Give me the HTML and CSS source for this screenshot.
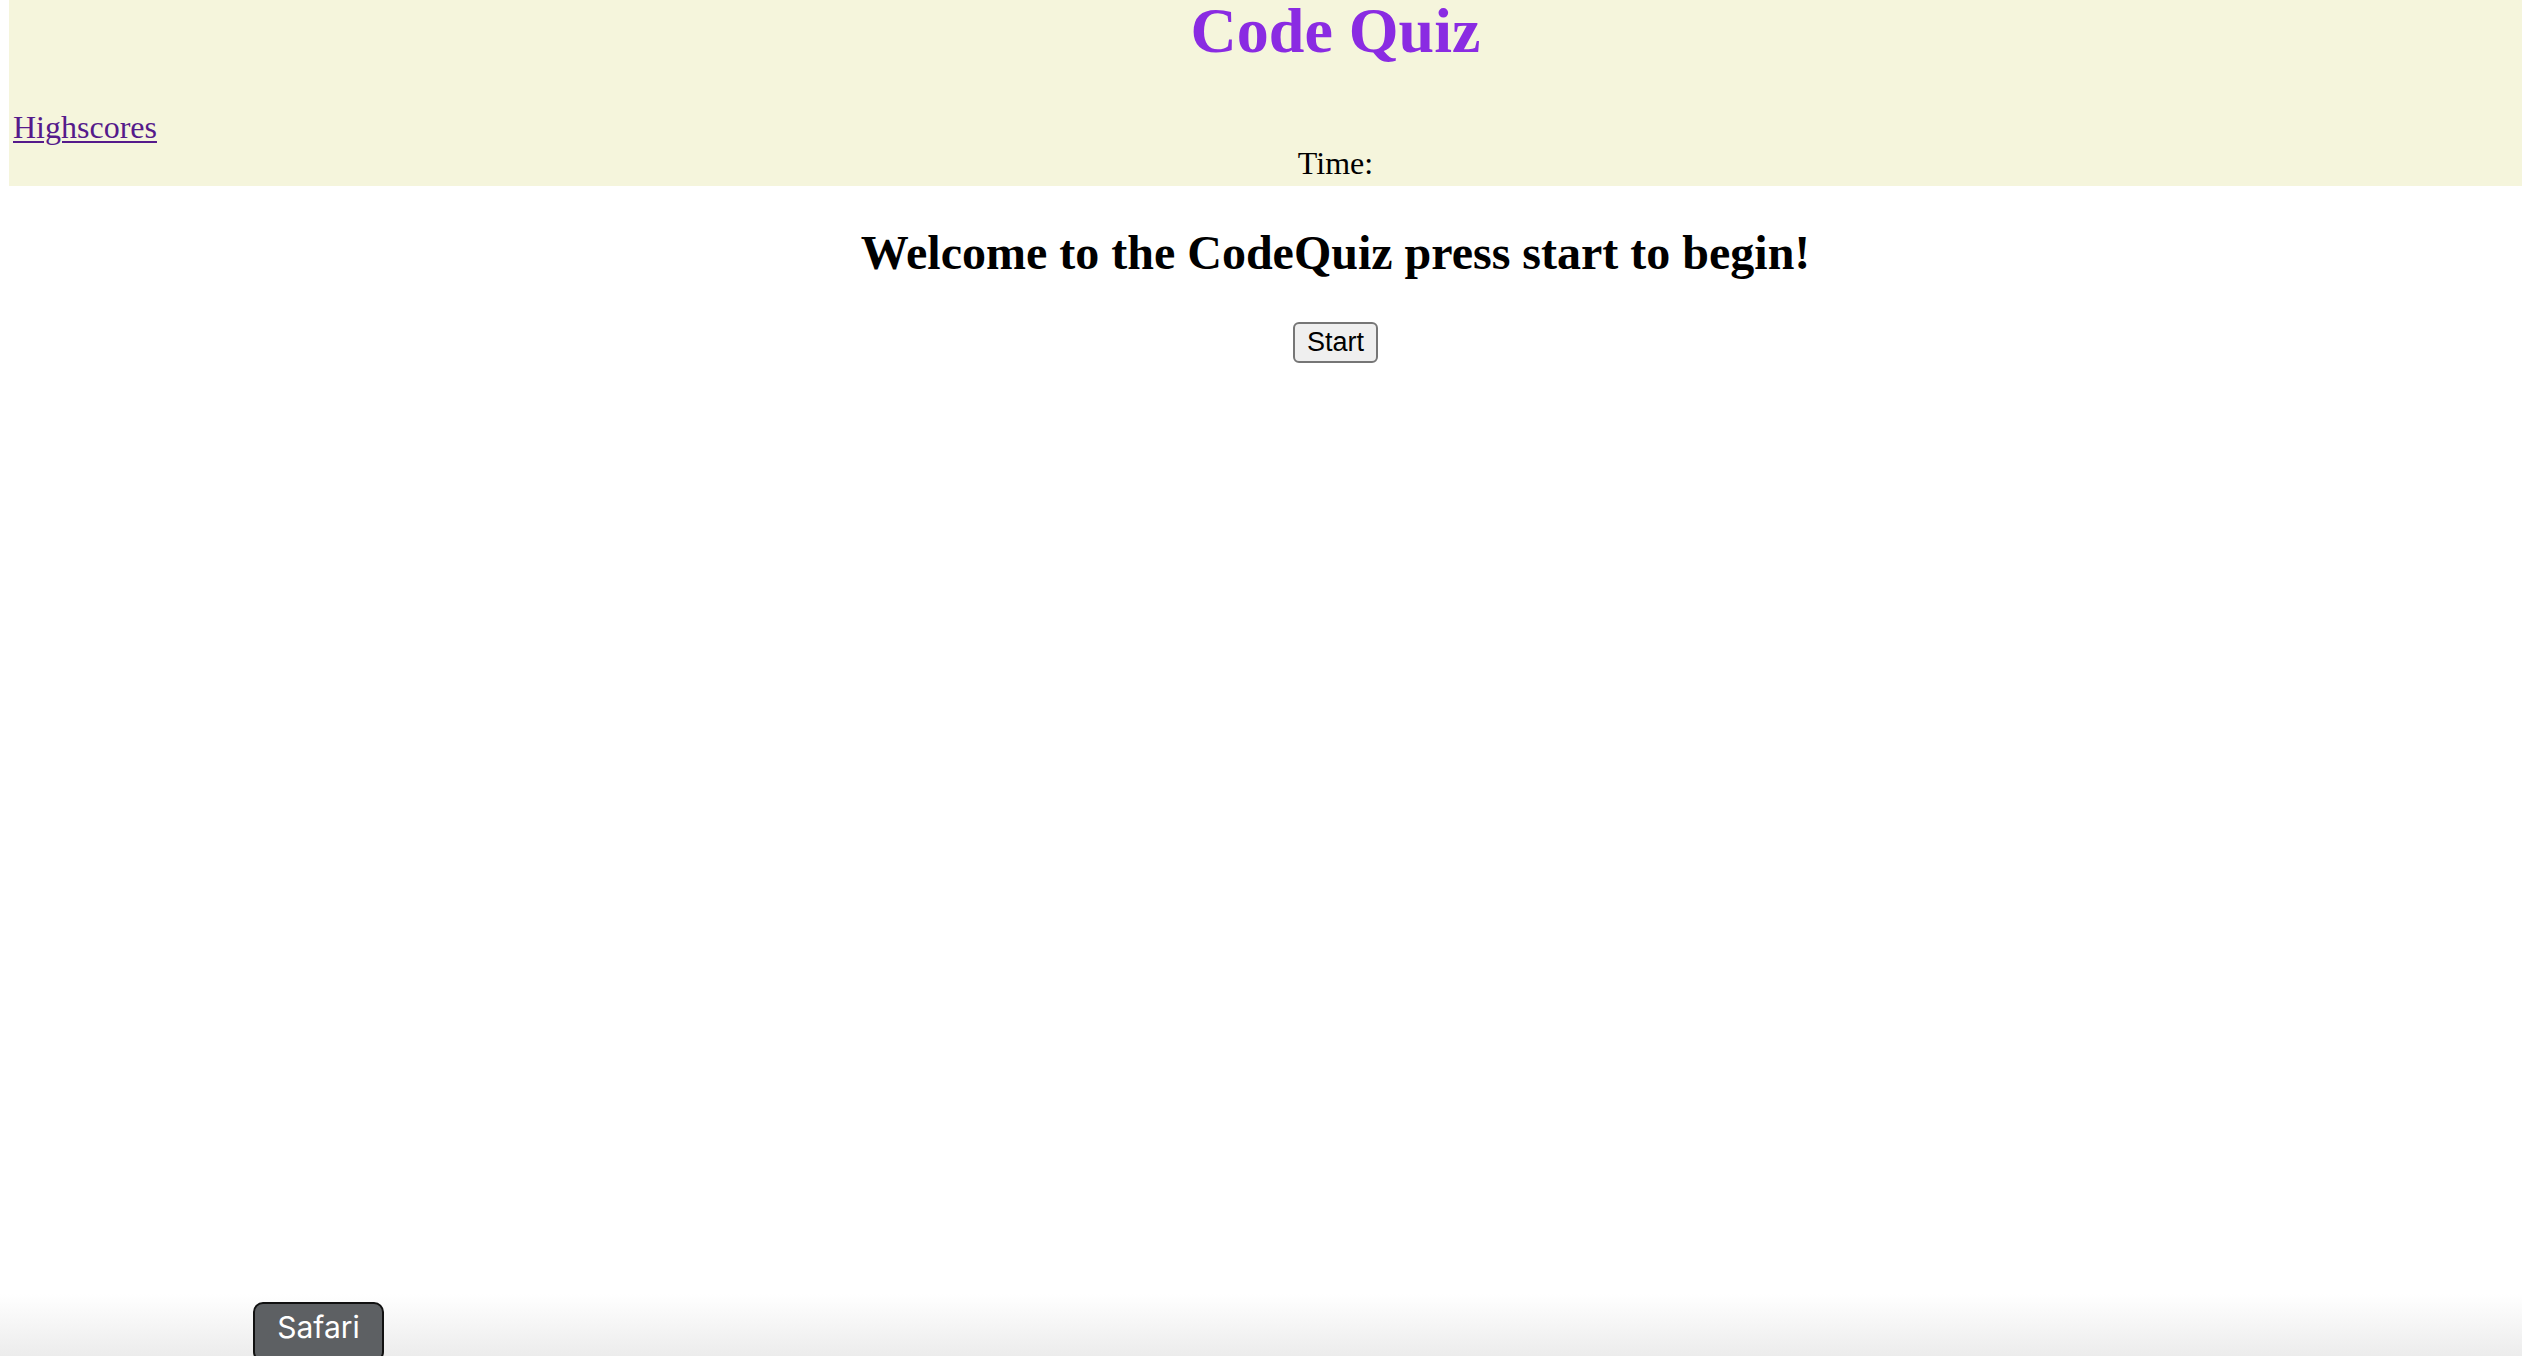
FILE: index.html
```html
<!DOCTYPE html>
<html lang="en">
<head>
<meta charset="utf-8">
<title>Code Quiz</title>
<link rel="stylesheet" href="styles.css">
</head>
<body>
<div class="page">
  <header class="top">
    <h1 class="title shifted">Code Quiz</h1>
    <a class="scores" href="#">Highscores</a>
    <div class="timer shifted">Time:</div>
  </header>
  <main class="intro shifted">
    <h2 class="welcome">Welcome to the CodeQuiz press start to begin!</h2>
    <button class="start" type="button">Start</button>
  </main>
</div>
<div class="dock-shade"></div>
<div class="tooltip">Safari<span class="tail"></span></div>
</body>
</html>
```

FILE: styles.css
```css
html {
  overflow: hidden;
  background: #ffffff;
}

body {
  margin: 0;
  height: 1356px;
  overflow: hidden;
  position: relative;
}

.page {
  margin-left: 9px;
  font-family: "Liberation Serif", "Times New Roman", serif;
}

.shifted {
  padding-left: 140px;
}

.top {
  background: #f5f5dc;
  height: 186px;
  box-sizing: border-box;
  display: flex;
  flex-direction: column;
}

.title {
  margin: 0;
  height: 62px;
  line-height: 62px;
  font-size: 64px;
  font-weight: bold;
  color: #8a2be2;
  text-align: center;
}

.scores {
  margin-top: 47px;
  margin-left: 4px;
  align-self: flex-start;
  font-size: 32px;
  line-height: 36px;
  color: #551a8b;
  text-decoration: underline;
  text-decoration-thickness: 2px;
  text-underline-offset: 3px;
}

.timer {
  font-size: 32px;
  line-height: 37px;
  color: #000000;
  text-align: center;
}

.intro {
  display: flex;
  flex-direction: column;
  align-items: center;
}

.welcome {
  margin: 39px 0 0;
  font-size: 48px;
  line-height: 55px;
  font-weight: bold;
  color: #000000;
  text-align: center;
}

.start {
  margin-top: 42px;
  font-family: "Liberation Sans", Arial, sans-serif;
  font-size: 27px;
  line-height: 29px;
  padding: 4px 12px;
  border: 2px solid #767676;
  border-radius: 6px;
  background: #efefef;
  color: #000000;
}

.dock-shade {
  position: absolute;
  left: 0;
  right: 0;
  bottom: 0;
  height: 62px;
  background: linear-gradient(to bottom, rgba(240, 240, 240, 0) 0%, rgba(236, 236, 236, 1) 100%);
}

.tooltip {
  position: absolute;
  left: 253px;
  top: 1302px;
  width: 131px;
  height: 60px;
  box-sizing: border-box;
  background: #5d6063;
  border: 2px solid #111111;
  border-radius: 10px;
  color: #ffffff;
  font-family: Inter, "Liberation Sans", sans-serif;
  font-size: 30px;
  line-height: 46px;
  text-align: center;
}

.tail {
  position: absolute;
  left: 50%;
  bottom: -8px;
  width: 16px;
  height: 16px;
  margin-left: -8px;
  background: #5d6063;
  transform: rotate(45deg);
}
```
